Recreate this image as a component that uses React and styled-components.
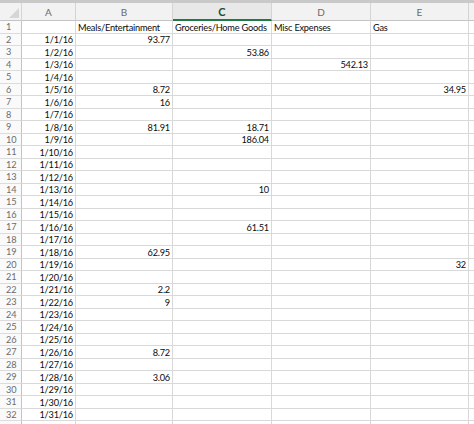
import React from 'react';
import styled, { createGlobalStyle } from 'styled-components';

const GlobalStyle = createGlobalStyle`
  html, body {
    margin: 0;
    padding: 0;
    background: #ffffff;
    overflow: hidden;
  }
`;

const COLS = [54, 97, 99, 99, 98];
const LETTERS = ['A', 'B', 'C', 'D', 'E'];

const Sheet = styled.div`
  width: 474px;
  height: 424px;
  overflow: hidden;
  border-top: 3px solid #c9c9c9;
  box-sizing: border-box;
  font-family: Lato, "Liberation Sans", sans-serif;
  font-size: 9.2px;
  letter-spacing: -0.2px;
  color: #0a0a0a;
`;

const Grid = styled.div`
  display: grid;
  grid-template-columns: 22px ${COLS.map(c => c + 'px').join(' ')} 40px;
  grid-template-rows: 18px;
  grid-auto-rows: 12.5px;
`;

const Corner = styled.div`
  position: relative;
  background: #f2f2f2;
  border-right: 1px solid #d4d4d4;
  border-bottom: 1px solid #c4c4c4;
  &::after {
    content: '';
    position: absolute;
    right: 2px;
    bottom: 2px;
    width: 0;
    height: 0;
    border-left: 10px solid transparent;
    border-bottom: 10px solid #d6d6d6;
  }
`;

const ColHead = styled.div`
  background: ${p => (p.$selected ? '#e8e8e8' : '#f2f2f2')};
  border-right: 1px solid #d4d4d4;
  border-bottom: ${p => (p.$selected ? '2px solid #1f7a45' : '1px solid #c4c4c4')};
  color: ${p => (p.$selected ? '#1d4f2f' : '#6b6b6b')};
  font-weight: ${p => (p.$selected ? 700 : 400)};
  font-size: ${p => (p.$selected ? '11px' : '10px')};
  letter-spacing: 0;
  display: flex;
  align-items: center;
  justify-content: center;
  box-sizing: border-box;
`;

const RowHead = styled.div`
  background: #fafafa;
  border-right: 1px solid #c4c4c4;
  border-bottom: 1px solid #dcdcdc;
  color: #6b6b6b;
  padding-left: 6px;
  display: flex;
  align-items: center;
  box-sizing: border-box;
  line-height: 1;
  letter-spacing: 0;
`;

const Cell = styled.div`
  border-right: 1px solid #d9d9d9;
  border-bottom: 1px solid #d9d9d9;
  display: flex;
  align-items: center;
  justify-content: ${p => (p.$num ? 'flex-end' : 'flex-start')};
  padding: 1px 2px 0;
  white-space: nowrap;
  overflow: hidden;
  box-sizing: border-box;
  line-height: 1;
`;

const headers = ['', 'Meals/Entertainment', 'Groceries/Home Goods', 'Misc Expenses', 'Gas'];

const values = {
  2: { B: '93.77' },
  3: { C: '53.86' },
  4: { D: '542.13' },
  6: { B: '8.72', E: '34.95' },
  7: { B: '16' },
  9: { B: '81.91', C: '18.71' },
  10: { C: '186.04' },
  14: { C: '10' },
  17: { C: '61.51' },
  19: { B: '62.95' },
  20: { E: '32' },
  22: { B: '2.2' },
  23: { B: '9' },
  27: { B: '8.72' },
  29: { B: '3.06' },
};

function buildRows() {
  const rows = [];
  for (let r = 1; r <= 33; r++) {
    const cells = [];
    if (r === 1) {
      headers.forEach(h => cells.push({ text: h, num: false }));
    } else if (r <= 32) {
      cells.push({ text: `1/${r - 1}/16`, num: true });
      ['B', 'C', 'D', 'E'].forEach(l => {
        cells.push({ text: (values[r] && values[r][l]) || '', num: true });
      });
    } else {
      for (let i = 0; i < 5; i++) cells.push({ text: '', num: true });
    }
    cells.push({ text: '', num: false });
    rows.push({ r, cells });
  }
  return rows;
}

export default function App() {
  const rows = buildRows();
  return (
    <>
      <GlobalStyle />
      <Sheet>
        <Grid>
          <Corner />
          {LETTERS.map(l => (
            <ColHead key={l} $selected={l === 'C'}>{l}</ColHead>
          ))}
          <ColHead />
          {rows.map(row => (
            <React.Fragment key={row.r}>
              <RowHead>{row.r <= 32 ? row.r : ''}</RowHead>
              {row.cells.map((c, i) => (
                <Cell key={i} $num={c.num}>{c.text}</Cell>
              ))}
            </React.Fragment>
          ))}
        </Grid>
      </Sheet>
    </>
  );
}
